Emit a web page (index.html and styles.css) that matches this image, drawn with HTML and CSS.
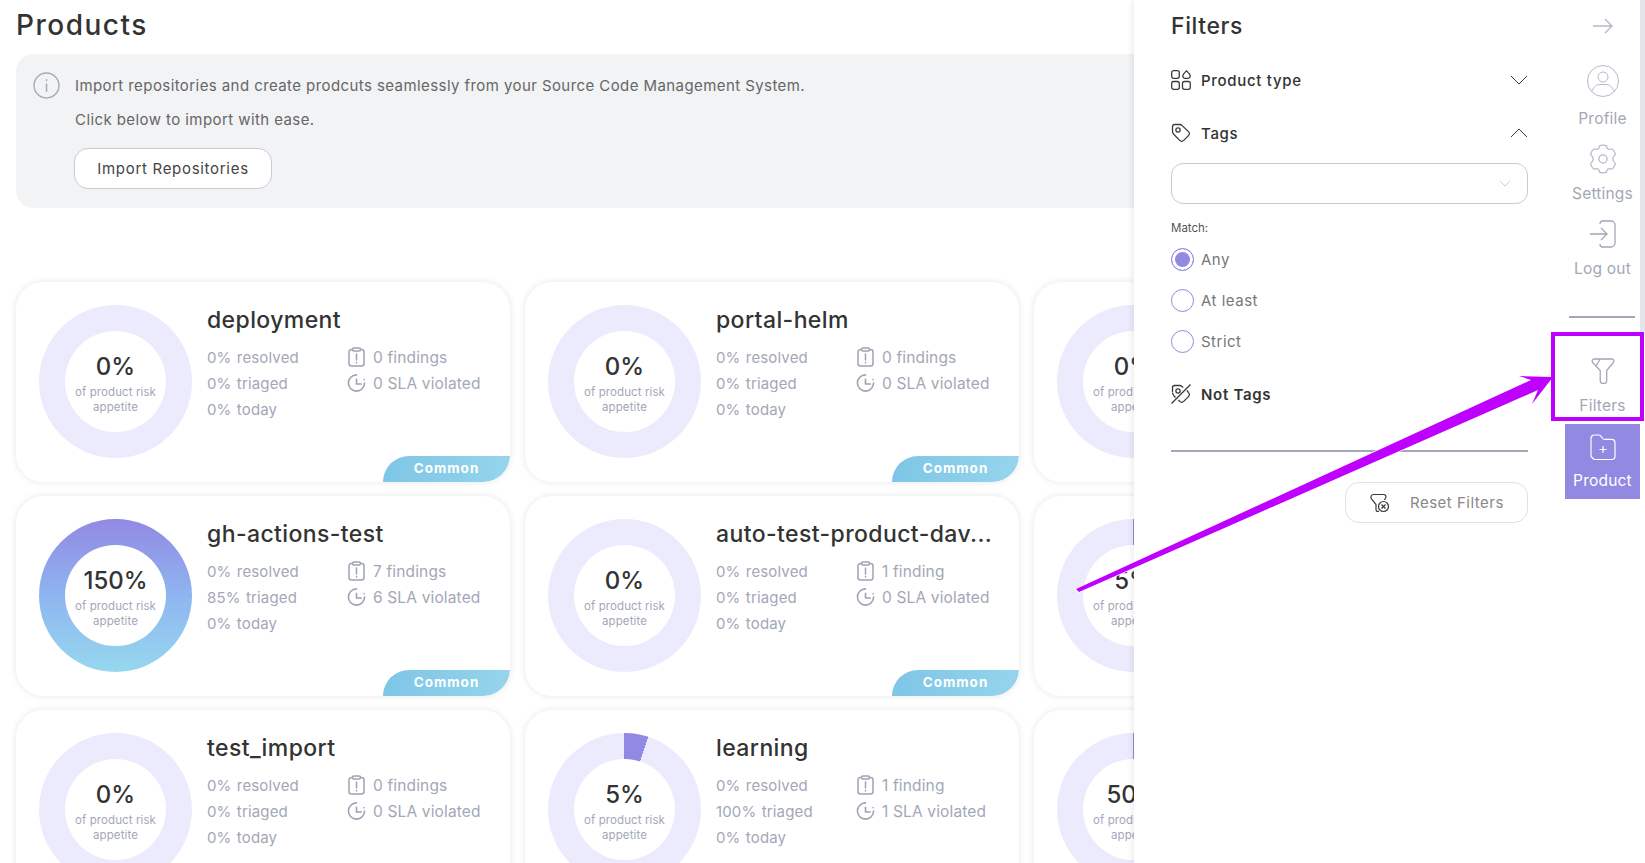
FILE: index.html
```html
<!DOCTYPE html>
<html lang="en">
<head>
    <meta charset="UTF-8">
    <title>Products</title>
    <link rel="stylesheet" href="styles.css">
</head>
<body>
    <svg class="icon-defs" width="0" height="0">
        <symbol id="clipboard" viewBox="0 0 18 20">
            <path d="M5 2.500H4a2.500 2.500 0 0 0-2.500 2.500v11.500A2.500 2.500 0 0 0 4 19h10a2.500 2.500 0 0 0 2.500-2.500V5A2.500 2.500 0 0 0 14 2.500h-1M5 2.500C5 1.500 5.700 1 6.500 1h5c.8 0 1.500.5 1.500 1.500S12.300 4 11.500 4h-5C5.700 4 5 3.500 5 2.500ZM9 7v6M9 15.500v.5" fill="none" stroke="currentColor" stroke-width="1.500" stroke-linecap="round"/>
        </symbol>
        <symbol id="clock" viewBox="0 0 20 20">
            <path d="M18.500 10A8.500 8.500 0 1 1 10 1.500M10 6v5h5M18 6.500v.1" fill="none" stroke="currentColor" stroke-width="1.700" stroke-linecap="round" stroke-linejoin="round"/>
        </symbol>
    </svg>

    <main class="content">
        <h1 class="page-title">Products</h1>
        <section class="import-box">
            <svg class="info-icon" viewBox="0 0 26 26" width="27" height="27">
                <circle cx="13" cy="13" r="12" fill="none" stroke="#a3acbf" stroke-width="1.400"/>
                <path d="M13 11.500v7M13 7.500v.6" stroke="#a3acbf" stroke-width="1.500" stroke-linecap="round"/>
            </svg>
            <div class="import-text">
                <p>Import repositories and create prodcuts seamlessly from your Source Code Management System.</p>
                <p>Click below to import with ease.</p>
                <button class="import-btn">Import Repositories</button>
            </div>
        </section>

        <div class="cards">
            <article class="card">
                <div class="donut"><div class="donut-hole"><strong>0%</strong><span>of product risk appetite</span></div></div>
                <div class="card-body">
                    <h2>deployment</h2>
                    <div class="stats">
                        <ul class="stat-col stat-pct"><li>0% resolved</li><li>0% triaged</li><li>0% today</li></ul>
                        <ul class="stat-col">
                            <li><svg class="stat-icon"><use href="#clipboard"/></svg>0 findings</li>
                            <li><svg class="stat-icon"><use href="#clock"/></svg>0 SLA violated</li>
                        </ul>
                    </div>
                </div>
                <span class="badge">Common</span>
            </article>
            <article class="card">
                <div class="donut"><div class="donut-hole"><strong>0%</strong><span>of product risk appetite</span></div></div>
                <div class="card-body">
                    <h2>portal-helm</h2>
                    <div class="stats">
                        <ul class="stat-col stat-pct"><li>0% resolved</li><li>0% triaged</li><li>0% today</li></ul>
                        <ul class="stat-col">
                            <li><svg class="stat-icon"><use href="#clipboard"/></svg>0 findings</li>
                            <li><svg class="stat-icon"><use href="#clock"/></svg>0 SLA violated</li>
                        </ul>
                    </div>
                </div>
                <span class="badge">Common</span>
            </article>
            <article class="card">
                <div class="donut"><div class="donut-hole"><strong>0%</strong><span>of product risk appetite</span></div></div>
            </article>

            <article class="card">
                <div class="donut donut-full"><div class="donut-hole"><strong>150%</strong><span>of product risk appetite</span></div></div>
                <div class="card-body">
                    <h2>gh-actions-test</h2>
                    <div class="stats">
                        <ul class="stat-col stat-pct"><li>0% resolved</li><li>85% triaged</li><li>0% today</li></ul>
                        <ul class="stat-col">
                            <li><svg class="stat-icon"><use href="#clipboard"/></svg>7 findings</li>
                            <li><svg class="stat-icon"><use href="#clock"/></svg>6 SLA violated</li>
                        </ul>
                    </div>
                </div>
                <span class="badge">Common</span>
            </article>
            <article class="card">
                <div class="donut"><div class="donut-hole"><strong>0%</strong><span>of product risk appetite</span></div></div>
                <div class="card-body">
                    <h2>auto-test-product-dav...</h2>
                    <div class="stats">
                        <ul class="stat-col stat-pct"><li>0% resolved</li><li>0% triaged</li><li>0% today</li></ul>
                        <ul class="stat-col">
                            <li><svg class="stat-icon"><use href="#clipboard"/></svg>1 finding</li>
                            <li><svg class="stat-icon"><use href="#clock"/></svg>0 SLA violated</li>
                        </ul>
                    </div>
                </div>
                <span class="badge">Common</span>
            </article>
            <article class="card">
                <div class="donut donut-slice"><div class="donut-hole"><strong>5%</strong><span>of product risk appetite</span></div></div>
            </article>

            <article class="card">
                <div class="donut"><div class="donut-hole"><strong>0%</strong><span>of product risk appetite</span></div></div>
                <div class="card-body">
                    <h2>test_import</h2>
                    <div class="stats">
                        <ul class="stat-col stat-pct"><li>0% resolved</li><li>0% triaged</li><li>0% today</li></ul>
                        <ul class="stat-col">
                            <li><svg class="stat-icon"><use href="#clipboard"/></svg>0 findings</li>
                            <li><svg class="stat-icon"><use href="#clock"/></svg>0 SLA violated</li>
                        </ul>
                    </div>
                </div>
            </article>
            <article class="card">
                <div class="donut donut-slice"><div class="donut-hole"><strong>5%</strong><span>of product risk appetite</span></div></div>
                <div class="card-body">
                    <h2>learning</h2>
                    <div class="stats">
                        <ul class="stat-col stat-pct"><li>0% resolved</li><li>100% triaged</li><li>0% today</li></ul>
                        <ul class="stat-col">
                            <li><svg class="stat-icon"><use href="#clipboard"/></svg>1 finding</li>
                            <li><svg class="stat-icon"><use href="#clock"/></svg>1 SLA violated</li>
                        </ul>
                    </div>
                </div>
            </article>
            <article class="card">
                <div class="donut donut-half"><div class="donut-hole"><strong>50%</strong><span>of product risk appetite</span></div></div>
            </article>
        </div>
    </main>

    <aside class="drawer">
        <div class="filters">
            <h2 class="filters-title">Filters</h2>

            <div class="filter-row filter-type">
                <svg viewBox="0 0 20 20" width="20" height="20" fill="none" stroke="#3a3a3a" stroke-width="1.300">
                    <rect x=".7" y=".7" width="7.600" height="7.600" rx="2"/>
                    <path d="M15.500.8c1 1.200 3.800 3.200 3.800 5.200a2.800 2.800 0 0 1-2.800 2.400h-2a2.800 2.800 0 0 1-2.800-2.400c0-2 2.800-4 3.800-5.200Z"/>
                    <rect x=".7" y="11.500" width="7.600" height="7.800" rx="2"/>
                    <rect x="11.500" y="11.500" width="7.800" height="7.800" rx="2"/>
                </svg>
                <span>Product type</span>
                <svg class="chevron" viewBox="0 0 18 10" width="18" height="10"><path d="M1 1l8 8 8-8" fill="none" stroke="#3a3a3a" stroke-width="1"/></svg>
            </div>

            <div class="filter-row filter-tags">
                <svg viewBox="0 0 20 20" width="20" height="20" fill="none" stroke="#3a3a3a" stroke-width="1.300">
                    <path d="M3.500 1.500h5c1 0 2 .4 2.700 1.100l6.300 6c1.200 1.200 1.200 2.800 0 4l-4.800 4.800c-1.200 1.200-2.800 1.200-4 0l-6-6.200C1.900 10.500 1.500 9.500 1.500 8.500V3.500c0-1.200.8-2 2-2Z"/>
                    <circle cx="7" cy="7" r="2.100"/>
                </svg>
                <span>Tags</span>
                <svg class="chevron" viewBox="0 0 18 10" width="18" height="10"><path d="M1 9l8-8 8 8" fill="none" stroke="#3a3a3a" stroke-width="1"/></svg>
            </div>

            <div class="select-box">
                <svg viewBox="0 0 12 7" width="12" height="7"><path d="M1 1l5 5 5-5" fill="none" stroke="#c9ccd6" stroke-width="1"/></svg>
            </div>

            <div class="match-label">Match:</div>
            <div class="radios">
                <label class="radio radio-on"><i></i>Any</label>
                <label class="radio"><i></i>At least</label>
                <label class="radio"><i></i>Strict</label>
            </div>

            <div class="filter-row filter-not">
                <svg viewBox="0 0 20 20" width="20" height="20" fill="none" stroke="#3a3a3a" stroke-width="1.300">
                    <path d="M1.500 8V3.500c0-1.200.8-2 2-2h5c1 0 2 .4 2.700 1.100l1 1M16 6.500l1.500 2.100c1.200 1.200 1.200 2.800 0 4l-4.800 4.800c-1.200 1.200-2.800 1.200-4 0L7.500 16M4.500 13.500l-1.300-1.300C1.900 10.500 1.500 9.500 1.500 8.500"/>
                    <path d="M.5 19.500 19.500.5"/>
                    <circle cx="7" cy="7" r="2.100"/>
                </svg>
                <span>Not Tags</span>
            </div>

            <div class="filters-line"></div>

            <button class="reset-btn">
                <svg viewBox="0 0 20 20" width="20" height="20" fill="none" stroke="#3a3a3a" stroke-width="1.200">
                    <path d="M9 18c-1.500 1-3 .5-3-1.500v-5L1.500 6C.4 4.500 1 1.500 3.500 1.500h10c2 0 2.800 1.800 2.200 3.300L14.500 7"/>
                    <circle cx="13.500" cy="13.500" r="5"/>
                    <path d="M11.500 11.500l4 4M15.500 11.500l-4 4"/>
                </svg>
                <span>Reset Filters</span>
            </button>
        </div>

        <nav class="side-nav">
            <div class="nav-back">
                <svg viewBox="0 0 20 16" width="20" height="16"><path d="M0 8h19M12 1l7 7-7 7" fill="none" stroke="#b5b9c6" stroke-width="1.400"/></svg>
            </div>
            <a class="nav-item nav-profile">
                <svg viewBox="0 0 32 32" width="32" height="32" fill="none" stroke="#b5b9c6" stroke-width="1">
                    <circle cx="16" cy="16" r="15.500"/>
                    <circle cx="16" cy="12" r="5"/>
                    <path d="M5 26c2-5 5-6.500 8-6.500h6c3 0 6 1.500 8 6.500"/>
                </svg>
                <span>Profile</span>
            </a>
            <a class="nav-item">
                <svg viewBox="0 0 28 28" width="30" height="30" fill="none" stroke="#b5b9c6" stroke-width="1.200">
                    <circle cx="14" cy="14" r="3.800"/>
                    <path d="M10.500 2.500c0-1 1-1.500 3.500-1.500s3.500.5 3.500 1.500c0 2 2 3 3.700 2.200 1-.5 2 0 3.200 2.100 1.300 2.200 1.300 3.400.4 3.900-1.700 1-1.700 2.700-1.700 3.300s0 2.300 1.700 3.300c.9.500.9 1.700-.4 3.900-1.200 2.100-2.200 2.600-3.200 2.100-1.700-.8-3.700.2-3.700 2.200 0 1-1 1.500-3.500 1.500s-3.500-.5-3.500-1.500c0-2-2-3-3.700-2.200-1 .5-2 0-3.200-2.100-1.300-2.200-1.300-3.400-.4-3.900 1.700-1 1.700-2.700 1.700-3.300s0-2.300-1.700-3.300c-.9-.5-.9-1.700.4-3.900 1.200-2.100 2.200-2.600 3.200-2.100 1.700.8 3.700-.2 3.700-2.200Z"/>
                </svg>
                <span>Settings</span>
            </a>
            <a class="nav-item">
                <svg viewBox="0 0 28 28" width="28" height="28" fill="none" stroke="#a3a7b7" stroke-width="1.300">
                    <path d="M11 4V3.500C11 2 12 1 13.500 1H22a4 4 0 0 1 4 4v18a4 4 0 0 1-4 4h-8.500C12 27 11 26 11 24.500V24"/>
                    <path d="M1 14h17M12 8l6 6-6 6"/>
                </svg>
                <span>Log out</span>
            </a>
            <div class="nav-line"></div>
            <a class="nav-item nav-filters">
                <svg viewBox="0 0 26 28" width="24" height="26" fill="none" stroke="#a3a7b7" stroke-width="1.400">
                    <path d="M3.500 1h19c2 0 3 2.200 1.700 3.800L17 13.500v10.500a3.500 3.500 0 0 1-7 0V13.500L1.800 4.800C.5 3.200 1.500 1 3.500 1Z"/>
                    <path d="M5.500 8.500 10 1"/>
                </svg>
                <span>Filters</span>
            </a>
            <a class="nav-item nav-product">
                <svg viewBox="0 0 26 26" width="26" height="26" fill="none" stroke="#fff" stroke-width="1.200">
                    <path d="M1 4.500C1 2.500 2.500 1 4.500 1h4c1 0 1.800.4 2.400 1.200l1.800 2.300c.4.500 1 .8 1.700.8h7.100c2 0 3.500 1.500 3.500 3.500v13.200c0 2-1.500 3.500-3.500 3.500h-17C2.500 24.500 1 23 1 21Z"/>
                    <path d="M13 12v7M9.500 15.500h7"/>
                </svg>
                <span>Product</span>
            </a>
        </nav>
        <div class="scroll-thumb"></div>
    </aside>

    <!-- annotation drawn over the screenshot -->
    <svg class="annot-arrow" viewBox="0 0 1645 863" width="1645" height="863">
        <polygon points="1076,589 1531,380 1519,376 1553,377 1532,404 1538,390 1079,592" fill="#bf00ff" stroke="#fff" stroke-width="1.500" paint-order="stroke"/>
    </svg>
    <div class="annot-box"></div>
</body>
</html>
```

FILE: styles.css
```css
* {
    box-sizing: border-box;
}
html, body {
    height: 100%;
}
body {
    margin: 0;
    overflow: hidden;
    background: #fff;
    color: #333;
    font-family: "Inter", "Liberation Sans", sans-serif;
}
.icon-defs {
    position: absolute;
}
.content {
    padding: 0 0 0 16px;
    width: 1540px;
}
.page-title {
    margin: 0;
    height: 54px;
    font-size: 28px;
    line-height: 50px;
    font-weight: 500;
    letter-spacing: 1.5px;
}
.import-box {
    display: flex;
    width: 1500px;
    height: 154px;
    padding: 18px 17px;
    gap: 15px;
    background: #f2f3f5;
    border-radius: 18px;
}
.info-icon {
    flex: none;
}
.import-text {
    margin-top: 5px;
    color: #666;
    font-size: 15px;
    letter-spacing: 0.42px;
}
.import-text p {
    margin: 0 0 16px;
    line-height: 18px;
}
.import-btn {
    display: block;
    width: 198px;
    height: 41px;
    margin-top: 19px;
    margin-left: -1px;
    background: #fff;
    border: 1px solid #c9ccd6;
    border-radius: 14px;
    color: #444;
    font-family: inherit;
    font-size: 15px;
    letter-spacing: 0.7px;
}
.cards {
    display: grid;
    grid-template-columns: repeat(3, 494px);
    gap: 14.500px 15px;
    margin-top: 74px;
}
.card {
    position: relative;
    display: flex;
    height: 199.500px;
    padding: 23px 0 0 23px;
    background: #fff;
    border-radius: 27px;
    box-shadow: 0 0 7px rgba(0, 0, 0, 0.1);
    overflow: hidden;
}
.donut {
    flex: none;
    display: flex;
    align-items: center;
    justify-content: center;
    width: 153px;
    height: 153px;
    border-radius: 50%;
    background: #ecebfd;
}
.donut-full {
    background: linear-gradient(180deg, #9289e3, #8fb5f0 50%, #96d8ee);
}
.donut-slice {
    background: conic-gradient(#9289e3 0 5%, #ecebfd 0);
}
.donut-half {
    background: conic-gradient(#9289e3 0 25%, #8fc6ee 0 50%, #ecebfd 0);
}
.donut-hole {
    display: flex;
    flex-direction: column;
    align-items: center;
    justify-content: center;
    width: 101px;
    height: 101px;
    padding: 4px 3px 0;
    border-radius: 50%;
    background: #fff;
    text-align: center;
}
.donut-hole strong {
    font-size: 24px;
    line-height: 30px;
    font-weight: 500;
}
.donut-hole span {
    margin-top: 3px;
    font-size: 11.500px;
    line-height: 15px;
    color: #a3a7b7;
    letter-spacing: 0.1px;
}
.card-body {
    margin-left: 15px;
    min-width: 0;
}
.card-body h2 {
    margin: 2px 0 11px;
    font-size: 23px;
    line-height: 26px;
    font-weight: 500;
    letter-spacing: 0.4px;
    white-space: nowrap;
}
.stats {
    display: flex;
}
.stat-col {
    width: 140px;
    margin: 0;
    padding: 0;
    list-style: none;
    color: #a3a7b7;
    font-size: 15.500px;
    letter-spacing: 0.15px;
}
.stat-pct {
    font-size: 15px;
    word-spacing: 1px;
}
.stat-col li {
    display: flex;
    align-items: center;
    height: 26px;
    white-space: pre;
}
.stat-icon {
    flex: none;
    width: 19px;
    height: 20px;
    margin-right: 7px;
    color: #9ea3b3;
}
.badge {
    position: absolute;
    right: 0;
    bottom: 0;
    width: 127px;
    height: 26px;
    background: linear-gradient(100deg, #7ec5e6, #96d5ec);
    border-radius: 26px 0 26px 0;
    color: #fff;
    font-size: 13.500px;
    font-weight: 700;
    line-height: 25px;
    text-align: center;
    letter-spacing: 1px;
}

/* filter drawer */
.drawer {
    position: absolute;
    top: 0;
    left: 1134px;
    display: flex;
    width: 511px;
    height: 100%;
    padding-right: 5px;
    background: #fff;
    box-shadow: -2px 0 6px rgba(0, 0, 0, 0.08);
}
.filters {
    width: 431px;
    padding: 0 37px;
}
.filters-title {
    margin: 0;
    height: 52px;
    font-size: 23px;
    line-height: 53px;
    font-weight: 500;
    letter-spacing: 0.6px;
}
.filter-row {
    display: flex;
    align-items: center;
    gap: 10px;
    height: 30px;
    font-size: 15px;
    font-weight: 500;
    letter-spacing: 0.7px;
}
.filter-row .chevron {
    margin-left: auto;
}
.filter-type {
    margin-top: 13px;
}
.filter-tags {
    margin-top: 23px;
}
.select-box {
    display: flex;
    align-items: center;
    justify-content: flex-end;
    height: 41px;
    margin-top: 15px;
    padding-right: 16px;
    border: 1px solid #c9ccd6;
    border-radius: 12px;
}
.match-label {
    margin-top: 16px;
    height: 16px;
    font-size: 11.500px;
    line-height: 16px;
    color: #555;
}
.radios {
    display: flex;
    flex-direction: column;
    gap: 19px;
    margin-top: 12px;
}
.radio {
    display: flex;
    align-items: center;
    gap: 7px;
    height: 22px;
    color: #777;
    font-size: 15px;
    letter-spacing: 0.5px;
}
.radio i {
    display: block;
    width: 23px;
    height: 23px;
    border: 1px solid #9289e3;
    border-radius: 50%;
}
.radio-on i {
    background: #9289e3;
    box-shadow: inset 0 0 0 3px #fff;
}
.filter-not {
    margin-top: 27px;
    font-weight: 600;
}
.filters-line {
    height: 2px;
    margin-top: 41px;
    background: #a3a7b7;
}
.reset-btn {
    display: flex;
    align-items: center;
    width: 183px;
    height: 41px;
    margin: 30px 0 0 auto;
    padding: 0 0 0 24px;
    background: #fff;
    border: 1px solid #dfe1e8;
    border-radius: 14px;
    color: #888;
    font-family: inherit;
    font-size: 15px;
    letter-spacing: 0.5px;
}
.reset-btn span {
    margin-left: 20px;
}
.side-nav {
    display: flex;
    flex-direction: column;
    width: 75px;
}
.nav-back {
    display: flex;
    align-items: center;
    justify-content: center;
    height: 52px;
}
.nav-item {
    display: flex;
    flex-direction: column;
    align-items: center;
    height: 75px;
    padding-top: 8px;
    color: #a3a7b7;
    font-size: 15.500px;
    letter-spacing: 0.2px;
}
.nav-item svg {
    height: 32px;
}
.nav-item span {
    margin-top: 9px;
    line-height: 20px;
}
.nav-profile {
    margin-top: 8px;
    padding-top: 5px;
}
.nav-profile span {
    margin-top: 12px;
}
.nav-line {
    width: 66px;
    height: 2px;
    margin: 31px 0 29px 4px;
    background: #a3a7b7;
}
.nav-product {
    margin-top: 2px;
    padding-top: 7px;
    background: #9289e3;
    color: #fff;
}
.nav-product span {
    margin-top: 8px;
}
.scroll-thumb {
    position: absolute;
    top: 0;
    right: 0;
    width: 5px;
    height: 332px;
    background: #e3e5ea;
}

/* annotation */
.annot-arrow {
    position: absolute;
    top: 0;
    left: 0;
    pointer-events: none;
}
.annot-box {
    position: absolute;
    top: 332px;
    left: 1551px;
    width: 93px;
    height: 89px;
    border: 4px solid #bf00ff;
}
```
